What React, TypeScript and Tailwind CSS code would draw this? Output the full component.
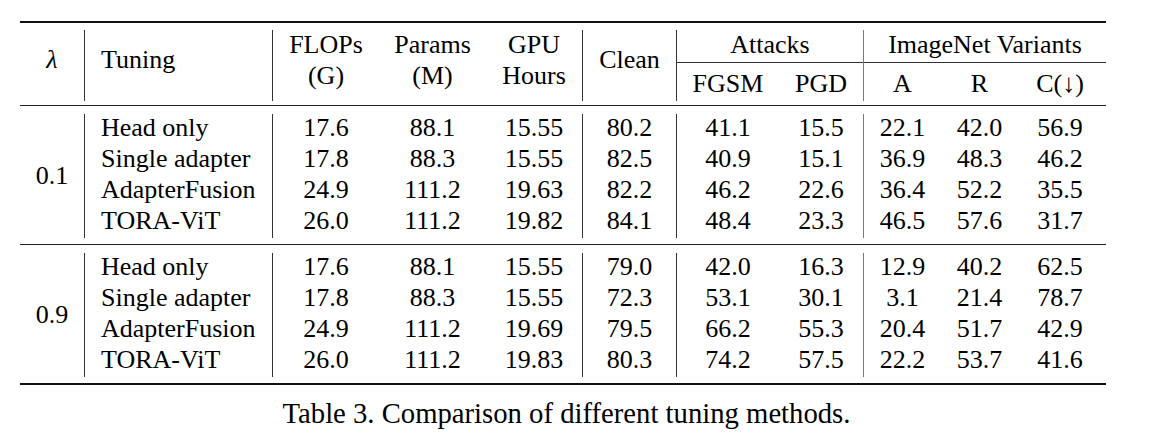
import React from "react";

const blocks = [
  {
    lambda: "0.1",
    rows: [
      ["Head only", "17.6", "88.1", "15.55", "80.2", "41.1", "15.5", "22.1", "42.0", "56.9"],
      ["Single adapter", "17.8", "88.3", "15.55", "82.5", "40.9", "15.1", "36.9", "48.3", "46.2"],
      ["AdapterFusion", "24.9", "111.2", "19.63", "82.2", "46.2", "22.6", "36.4", "52.2", "35.5"],
      ["TORA-ViT", "26.0", "111.2", "19.82", "84.1", "48.4", "23.3", "46.5", "57.6", "31.7"],
    ],
  },
  {
    lambda: "0.9",
    rows: [
      ["Head only", "17.6", "88.1", "15.55", "79.0", "42.0", "16.3", "12.9", "40.2", "62.5"],
      ["Single adapter", "17.8", "88.3", "15.55", "72.3", "53.1", "30.1", "3.1", "21.4", "78.7"],
      ["AdapterFusion", "24.9", "111.2", "19.69", "79.5", "66.2", "55.3", "20.4", "51.7", "42.9"],
      ["TORA-ViT", "26.0", "111.2", "19.83", "80.3", "74.2", "57.5", "22.2", "53.7", "41.6"],
    ],
  },
];

// column groups between vertical rules: [width class of each cell, index in row]
const costCols: [string, number][] = [
  ["w-[106px]", 1],
  ["w-[107px]", 2],
  ["w-[96px]", 3],
];
const attackCols: [string, number][] = [
  ["w-[102px]", 5],
  ["w-[84px]", 6],
];
const variantCols: [string, number][] = [
  ["w-[77px]", 7],
  ["w-[77px]", 8],
  ["w-[84px]", 9],
];

function Cells({ rows, cols }: { rows: string[][]; cols: [string, number][] }) {
  return (
    <div className="-mt-[2px] flex flex-col">
      {rows.map((r, i) => (
        <div key={i} className="flex h-[31px] leading-[31px]">
          {cols.map(([w, idx]) => (
            <div key={idx} className={`${w} text-center`}>
              {r[idx]}
            </div>
          ))}
        </div>
      ))}
    </div>
  );
}

function Block({ lambda, rows }: { lambda: string; rows: string[][] }) {
  return (
    <div className="flex h-[138px] pt-[8px] pb-[6px]">
      <div className="w-[64px] -mt-[2px] flex items-center justify-center leading-[31px]">{lambda}</div>
      <div className="w-[188px] border-l border-[#333] pl-[16px]">
        <div className="-mt-[2px] flex flex-col">
          {rows.map((r, i) => (
            <div key={i} className="h-[31px] leading-[31px]">
              {r[0]}
            </div>
          ))}
        </div>
      </div>
      <div className="w-[310px] border-l border-[#333]">
        <Cells rows={rows} cols={costCols} />
      </div>
      <div className="w-[94px] border-l border-[#333]">
        <Cells rows={rows} cols={[["w-[93px]", 4]]} />
      </div>
      <div className="w-[187px] border-l border-[#333]">
        <Cells rows={rows} cols={attackCols} />
      </div>
      <div className="w-[243px] border-l border-[#7a7a7a]">
        <Cells rows={rows} cols={variantCols} />
      </div>
    </div>
  );
}

export default function App() {
  return (
    <div className="min-h-[437px] bg-white text-black font-['Liberation_Serif','Times_New_Roman',serif]">
      <div className="ml-[20px] pt-[21px] w-[1086px] text-[26px]">
        <div className="h-[2px] bg-[#111]" />

        {/* header */}
        <div className="flex h-[82px] pt-[7px] pb-[4px]">
          <div className="w-[64px] pt-[14px] text-center leading-[31px] italic">λ</div>
          <div className="w-[188px] border-l border-[#333] pl-[16px] pt-[14px] leading-[31px]">Tuning</div>
          <div className="w-[310px] border-l border-[#333] flex">
            <div className="w-[106px] -mt-[1px] text-center leading-[31px]">
              FLOPs
              <br />
              (G)
            </div>
            <div className="w-[107px] -mt-[1px] text-center leading-[31px]">
              Params
              <br />
              (M)
            </div>
            <div className="w-[96px] -mt-[1px] text-center leading-[31px]">
              GPU
              <br />
              Hours
            </div>
          </div>
          <div className="w-[94px] border-l border-[#333] pt-[14px] text-center leading-[31px]">Clean</div>
          <div className="w-[187px] border-l border-[#333] flex flex-col">
            <div className="h-[33px] border-b border-[#333] text-center leading-[31px]">
              <div className="-mt-[1px]">Attacks</div>
            </div>
            <div className="flex pt-[5px] leading-[31px]">
              <div className="w-[102px] text-center">FGSM</div>
              <div className="w-[84px] text-center">PGD</div>
            </div>
          </div>
          <div className="w-[243px] border-l border-[#7a7a7a] flex flex-col">
            <div className="h-[33px] border-b border-[#333] text-center leading-[31px]">
              <div className="-mt-[1px]">ImageNet Variants</div>
            </div>
            <div className="flex pt-[5px] leading-[31px]">
              <div className="w-[77px] text-center">A</div>
              <div className="w-[77px] text-center">R</div>
              <div className="w-[84px] text-center">C(↓)</div>
            </div>
          </div>
        </div>

        <div className="h-[1px] bg-[#222]" />
        <Block lambda={blocks[0].lambda} rows={blocks[0].rows} />
        <div className="h-[1px] bg-[#222]" />
        <Block lambda={blocks[1].lambda} rows={blocks[1].rows} />
        <div className="h-[2px] bg-[#111]" />

        <div className="mt-[12px] pl-[7px] text-center text-[28.7px] leading-[32px]">
          Table 3. Comparison of different tuning methods.
        </div>
      </div>
    </div>
  );
}
